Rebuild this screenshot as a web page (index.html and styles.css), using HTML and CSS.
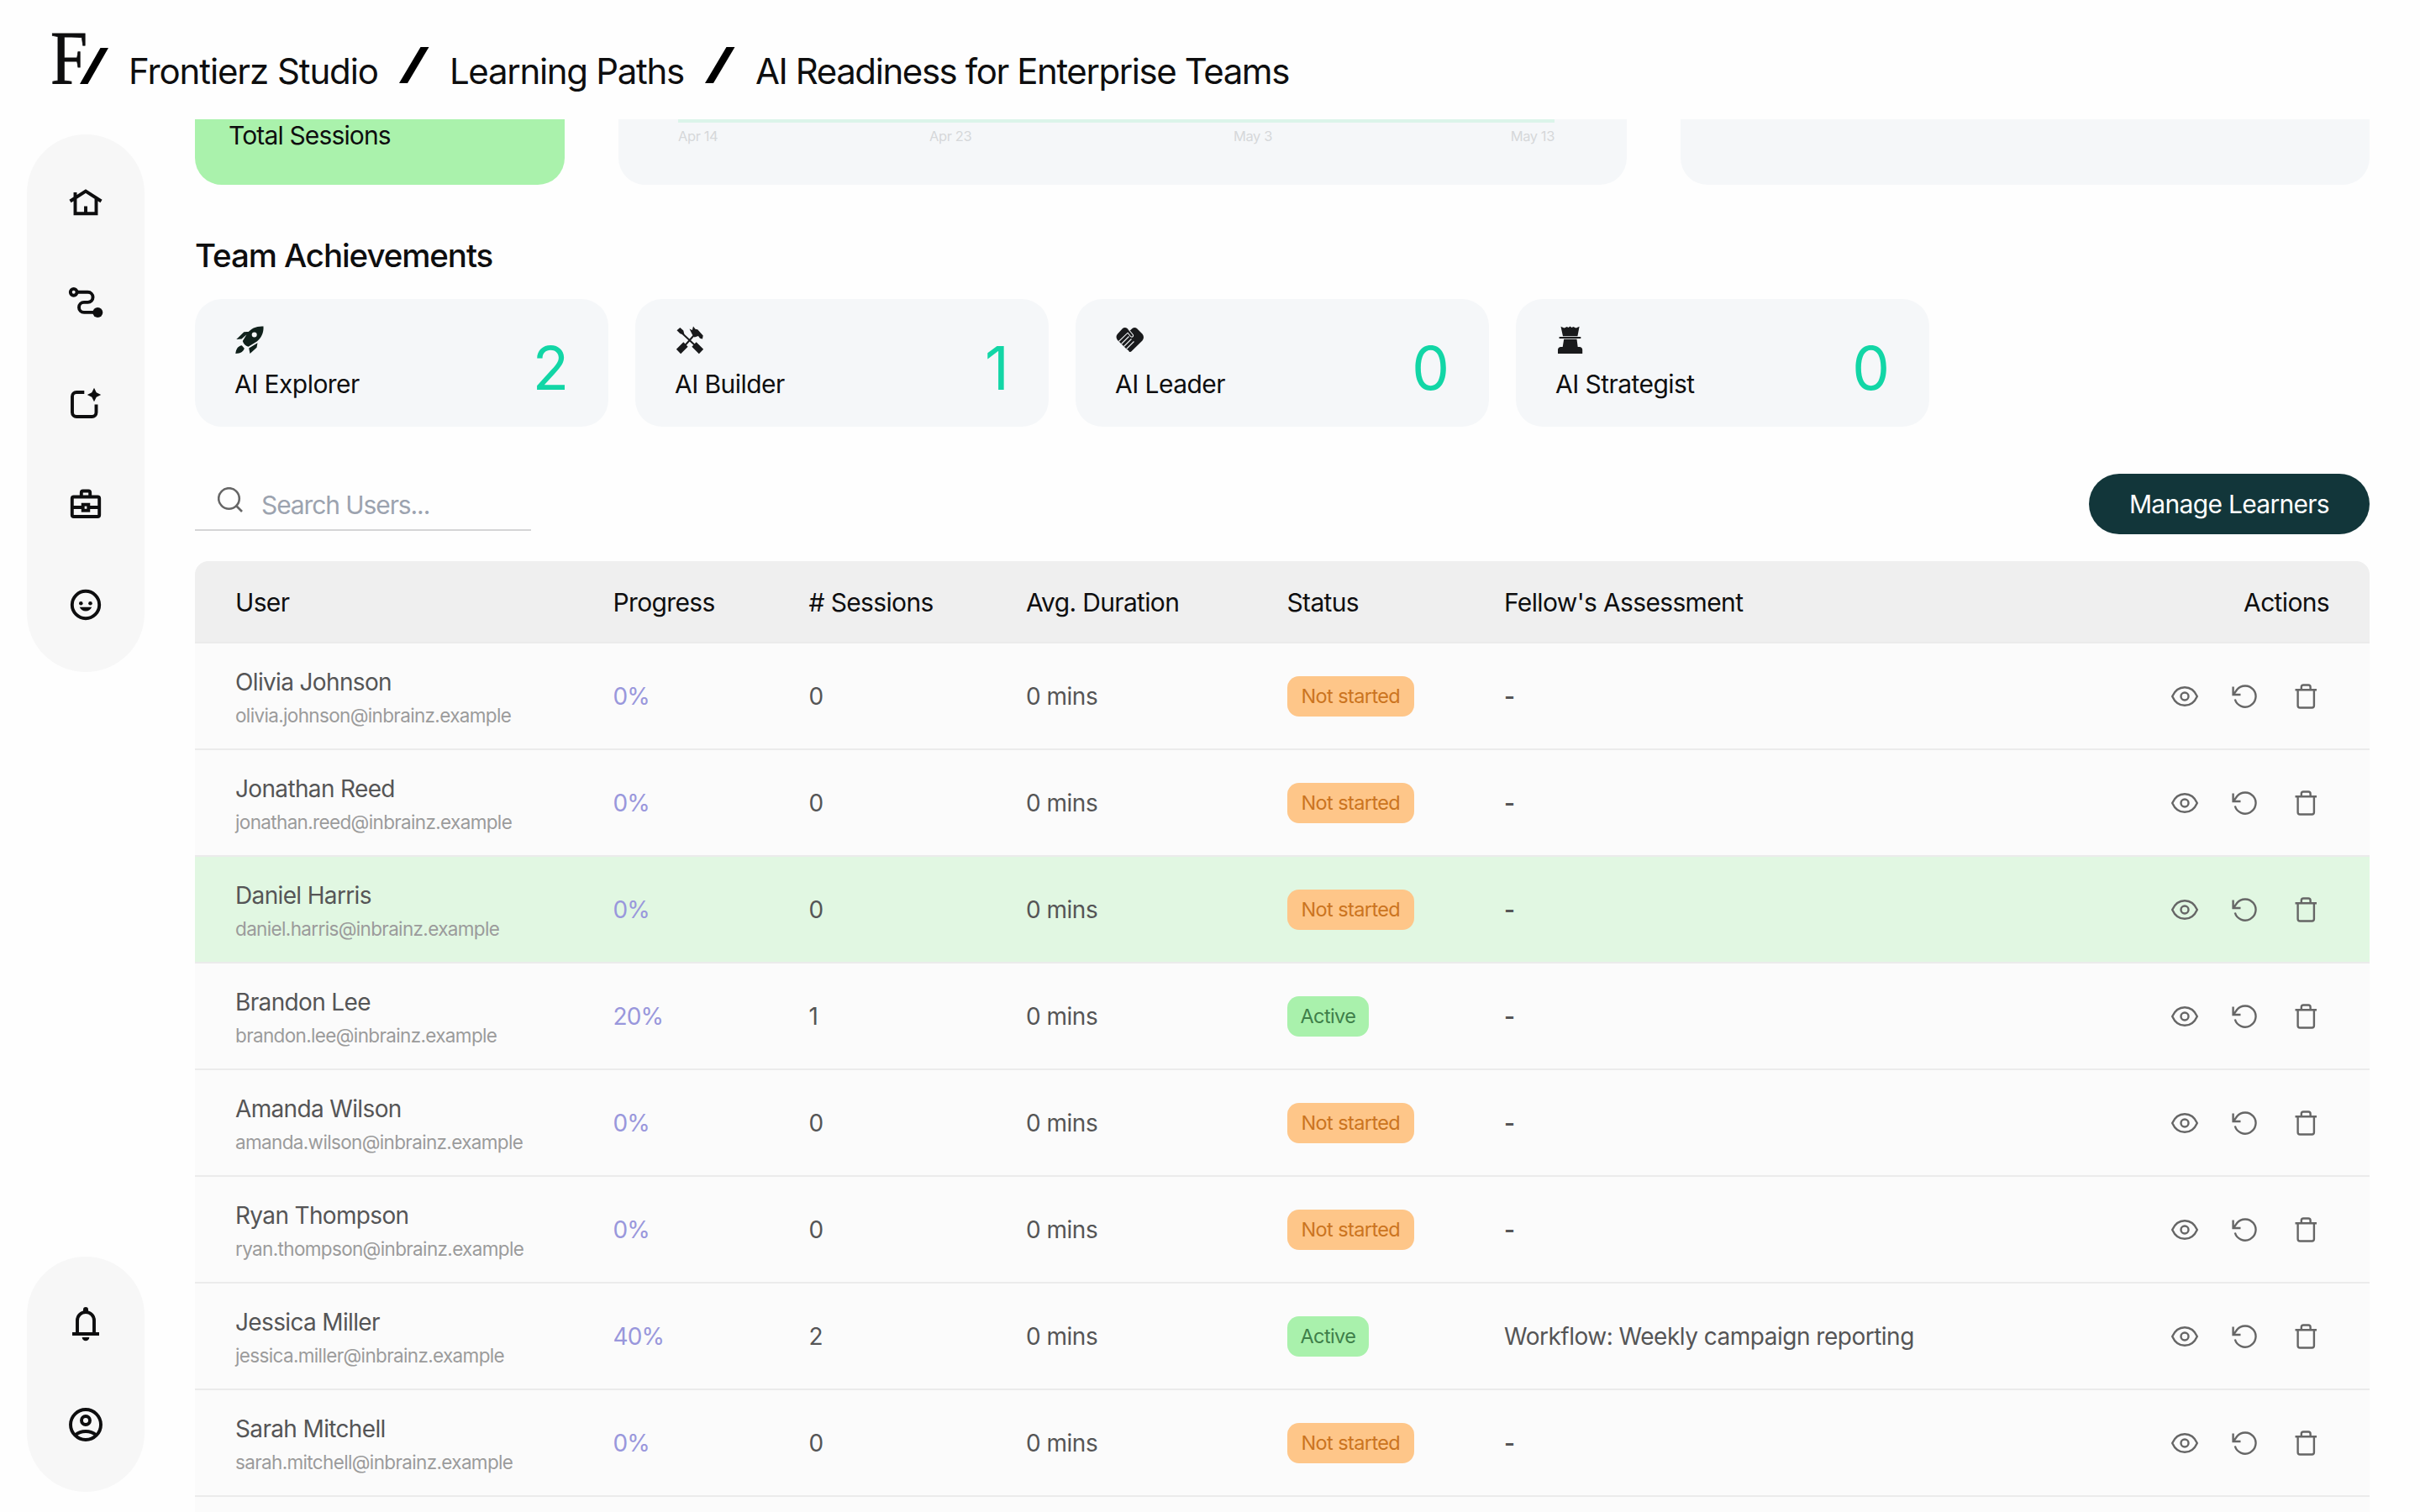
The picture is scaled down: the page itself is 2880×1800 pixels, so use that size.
FILE: index.html
```html
<!DOCTYPE html>
<html lang="en">
<head>
    <meta charset="UTF-8">
    <meta name="viewport" content="width=device-width, initial-scale=1.0">
    <title>AI Readiness for Enterprise Teams</title>
    <link rel="stylesheet" href="styles.css">
</head>
<body>
    <!-- Row action icons, reused by every user row -->
    <svg class="sprite">
        <symbol id="eye" viewBox="0 0 32 32">
            <path d="M1.200 16C4.500 8.500 10 5.200 16 5.200s11.500 3.300 14.800 10.800C27.500 23.500 22 26.800 16 26.800S4.500 23.500 1.200 16z"/>
            <circle cx="16" cy="16" r="4.500"/>
        </symbol>
        <symbol id="reset" viewBox="0 0 32 32">
            <path d="M1.600 4.500V14H10.500M2.200 13.600L6.200 8A12.600 12.600 0 1 1 3.800 19.500"/>
        </symbol>
        <symbol id="trash" viewBox="0 0 32 32">
            <path d="M3.500 8.200H29M10.800 8V5a2.500 2.500 0 0 1 2.500-2.500h5.800a2.500 2.500 0 0 1 2.500 2.500V8M6.600 8.200V27a2.500 2.500 0 0 0 2.500 2.500h14.300a2.500 2.500 0 0 0 2.500-2.500V8.200"/>
        </symbol>
    </svg>

    <header class="header">
        <div class="logo">
            <span class="logo-letter">F</span>
            <svg class="logo-slash" width="34" height="43" viewBox="0 0 34 43"><polygon points="24.500,0 34,0 9.500,43 0,43"/></svg>
        </div>
        <nav class="crumbs">
            <span class="crumb">Frontierz Studio</span>
            <svg class="slash" width="36" height="43" viewBox="0 0 36 43"><polygon points="25.500,0 35.500,0 10,43 0,43"/></svg>
            <span class="crumb">Learning Paths</span>
            <svg class="slash" width="36" height="43" viewBox="0 0 36 43"><polygon points="25.500,0 35.500,0 10,43 0,43"/></svg>
            <span class="crumb current">AI Readiness for Enterprise Teams</span>
        </nav>
    </header>

    <div class="layout">
        <aside class="sidebar">
            <nav class="pill-nav">
                <!-- Home -->
                <svg class="nav-icon" viewBox="0 0 48 48">
                    <path d="M5.500 23.500L24 11.500l18.500 12M11.500 13v25.300h25V19M24 29.500v9"/>
                </svg>
                <!-- Learning paths -->
                <svg class="nav-icon" viewBox="0 0 48 48">
                    <path d="M14 11.800h12.500a6 6 0 0 1 0 12.100H22a6 6 0 0 0 0 12h16"/>
                    <circle cx="9.700" cy="11.800" r="3.900"/>
                    <circle class="solid" cx="38.300" cy="35.900" r="6"/>
                </svg>
                <!-- New session -->
                <svg class="nav-icon" viewBox="0 0 48 48">
                    <path d="M22.300 11H13a5 5 0 0 0-5 5v19a5 5 0 0 0 5 5h18.500a5 5 0 0 0 5-5v-9.500"/>
                    <path class="solid" d="M34 5.800l2.700 5.500 5.500 2.700-5.500 2.700L34 22.200l-2.700-5.500-5.500-2.700 5.500-2.700z"/>
                </svg>
                <!-- Toolbox -->
                <svg class="nav-icon" viewBox="0 0 48 48">
                    <rect x="7.800" y="15.500" width="32.400" height="23.500" rx="2"/>
                    <path d="M18.800 15v-4.500a2 2 0 0 1 2-2h6.400a2 2 0 0 1 2 2V15M8 28h12M28 28h12"/>
                    <rect x="20.700" y="24.700" width="6.600" height="7"/>
                </svg>
                <!-- Fellow -->
                <svg class="nav-icon" viewBox="0 0 48 48">
                    <circle cx="24" cy="24" r="16.200"/>
                    <circle class="solid" cx="18.300" cy="22.200" r="2.300"/>
                    <circle class="solid" cx="29.500" cy="22.200" r="2.300"/>
                    <path class="solid" d="M16.800 26.700h14.400c-1.200 3-3.900 4.900-7.200 4.900s-6-1.900-7.200-4.900z"/>
                </svg>
            </nav>
            <nav class="pill-nav">
                <!-- Notifications -->
                <svg class="nav-icon" viewBox="0 0 48 48">
                    <path d="M14 36V20a10 10 0 0 1 20 0v16M8 36h32"/>
                    <path class="solid" d="M21 10V7a3 3 0 0 1 6 0v3zM19.700 40h8.600a4.300 4.300 0 0 1-8.600 0z"/>
                </svg>
                <!-- Account -->
                <svg class="nav-icon" viewBox="0 0 48 48">
                    <circle cx="24" cy="24" r="18"/>
                    <circle cx="24" cy="19" r="5"/>
                    <path d="M11.500 36.500C15 33.500 19 32 24 32s9 1.500 12.500 4.500"/>
                </svg>
            </nav>
        </aside>

        <main class="main">
            <section class="stats">
                <div class="stat stat-green">Total Sessions</div>
                <div class="stat chart">
                    <div class="chart-line"></div>
                    <div class="chart-labels">
                        <span>Apr 14</span>
                        <span>Apr 23</span>
                        <span>May 3</span>
                        <span>May 13</span>
                    </div>
                </div>
                <div class="stat"></div>
            </section>

            <h2>Team Achievements</h2>
            <section class="achievements">
                <div class="card">
                    <div>
                        <svg class="badge" viewBox="0 0 34 34">
                            <path fill="#10211c" d="M33.500.5C25.500 0 18.500 3 14.500 8.500L8.800 18c.8 3 3.300 5.800 6.700 6.800l10.300-6.300C31 14 34 8.500 33.500.5zM17.500 6.800l-7.200.5L1.300 16l6.200-.6zM26.500 20.300l-10.300 6.200 1.300 6.500 8-7.200zM7.800 23.200c-4.300.5-6.800 3.800-7.500 9.800 6-.3 9.500-2.300 10.500-6.200z"/>
                            <circle cx="22.700" cy="10.600" r="3" fill="#f5f7f9"/>
                        </svg>
                        <div class="card-label">AI Explorer</div>
                    </div>
                    <div class="card-count">2</div>
                </div>
                <div class="card">
                    <div>
                        <svg class="badge" viewBox="0 0 34 34">
                            <path d="M7 8l16 15M10.500 24L22 11" fill="none" stroke="#191a1c" stroke-width="2"/>
                            <path d="M3.500 30.500l8.500-8.500M22 22l8.500 8.500" fill="none" stroke="#191a1c" stroke-width="7.500"/>
                            <path fill="#191a1c" d="M1.500 5.200L5.300 2l4 3.500 1.200 5-5-1.200zM16.500 3.500L19.800 5 21 .5l2.500 3.200 2.700.6 6.500 7.200-.7 4-3-.7-2-2.800-4.500 1.500-2.500-3z"/>
                        </svg>
                        <div class="card-label">AI Builder</div>
                    </div>
                    <div class="card-count">1</div>
                </div>
                <div class="card">
                    <div>
                        <svg class="badge" viewBox="0 0 34 34">
                            <path fill="#191a1c" d="M8 3c1.500-1.500 4-1.500 5.500 0l3.300 2.500L19.500 3c1.500-1.500 4-1.500 5.500 0l6.500 6.500c2 2.500 2 5.500 0 8L18.500 30.300c-1.200 1.200-3 .8-3.200-.8l-3-2.200-2.500-2.500-3-3-3-3-1.800-1.800c-2-2.500-2-5.500 0-7.500z"/>
                            <path fill="none" stroke="#f5f7f9" stroke-width="1.100" d="M14.500 3.500l5.800 7c1.200 2.500-1.800 3.500-3.200 1.500l-3-3.800L3.500 18.500M15.500 12.500L6.500 21.500M18.500 15.500l-9 9M21.500 18.500l-9 9"/>
                        </svg>
                        <div class="card-label">AI Leader</div>
                    </div>
                    <div class="card-count">0</div>
                </div>
                <div class="card">
                    <div>
                        <svg class="badge" viewBox="0 0 34 34">
                            <path fill="#191a1c" d="M5.500.8l4 1.700 3.300-1.400L14.500 2l2-1.500 2 1.500 1.800-.9 3.300 1.400 4-1.700-2.200 11.400H8zM3.600 13h25.700v2H3.600zM9.200 15.800h15.300l1.200 9.200h2c2 0 3.500 1.300 3.500 3.300V33H2v-4.700C2 26.300 3.500 25 5.500 25h2.200z"/>
                        </svg>
                        <div class="card-label">AI Strategist</div>
                    </div>
                    <div class="card-count">0</div>
                </div>
            </section>

            <div class="toolbar">
                <div class="search">
                    <svg class="search-icon" viewBox="0 0 30 30"><circle cx="13.500" cy="13.500" r="12.300"/><path d="M22.500 22.500l6.500 6.500"/></svg>
                    <span>Search Users...</span>
                </div>
                <button class="manage">Manage Learners</button>
            </div>

            <section class="table">
                <div class="row head">
                    <div>User</div>
                    <div>Progress</div>
                    <div># Sessions</div>
                    <div>Avg. Duration</div>
                    <div>Status</div>
                    <div>Fellow's Assessment</div>
                    <div class="actions-title">Actions</div>
                </div>
                <div class="row">
                    <div class="user"><div class="name">Olivia Johnson</div><div class="email">olivia.johnson@inbrainz.example</div></div>
                    <div class="progress">0%</div>
                    <div>0</div>
                    <div>0 mins</div>
                    <div><span class="tag pending">Not started</span></div>
                    <div class="empty">-</div>
                    <div class="actions"><svg><use href="#eye"/></svg><svg><use href="#reset"/></svg><svg><use href="#trash"/></svg></div>
                </div>
                <div class="row">
                    <div class="user"><div class="name">Jonathan Reed</div><div class="email">jonathan.reed@inbrainz.example</div></div>
                    <div class="progress">0%</div>
                    <div>0</div>
                    <div>0 mins</div>
                    <div><span class="tag pending">Not started</span></div>
                    <div class="empty">-</div>
                    <div class="actions"><svg><use href="#eye"/></svg><svg><use href="#reset"/></svg><svg><use href="#trash"/></svg></div>
                </div>
                <div class="row selected">
                    <div class="user"><div class="name">Daniel Harris</div><div class="email">daniel.harris@inbrainz.example</div></div>
                    <div class="progress">0%</div>
                    <div>0</div>
                    <div>0 mins</div>
                    <div><span class="tag pending">Not started</span></div>
                    <div class="empty">-</div>
                    <div class="actions"><svg><use href="#eye"/></svg><svg><use href="#reset"/></svg><svg><use href="#trash"/></svg></div>
                </div>
                <div class="row">
                    <div class="user"><div class="name">Brandon Lee</div><div class="email">brandon.lee@inbrainz.example</div></div>
                    <div class="progress">20%</div>
                    <div>1</div>
                    <div>0 mins</div>
                    <div><span class="tag active">Active</span></div>
                    <div class="empty">-</div>
                    <div class="actions"><svg><use href="#eye"/></svg><svg><use href="#reset"/></svg><svg><use href="#trash"/></svg></div>
                </div>
                <div class="row">
                    <div class="user"><div class="name">Amanda Wilson</div><div class="email">amanda.wilson@inbrainz.example</div></div>
                    <div class="progress">0%</div>
                    <div>0</div>
                    <div>0 mins</div>
                    <div><span class="tag pending">Not started</span></div>
                    <div class="empty">-</div>
                    <div class="actions"><svg><use href="#eye"/></svg><svg><use href="#reset"/></svg><svg><use href="#trash"/></svg></div>
                </div>
                <div class="row">
                    <div class="user"><div class="name">Ryan Thompson</div><div class="email">ryan.thompson@inbrainz.example</div></div>
                    <div class="progress">0%</div>
                    <div>0</div>
                    <div>0 mins</div>
                    <div><span class="tag pending">Not started</span></div>
                    <div class="empty">-</div>
                    <div class="actions"><svg><use href="#eye"/></svg><svg><use href="#reset"/></svg><svg><use href="#trash"/></svg></div>
                </div>
                <div class="row">
                    <div class="user"><div class="name">Jessica Miller</div><div class="email">jessica.miller@inbrainz.example</div></div>
                    <div class="progress">40%</div>
                    <div>2</div>
                    <div>0 mins</div>
                    <div><span class="tag active">Active</span></div>
                    <div>Workflow: Weekly campaign reporting</div>
                    <div class="actions"><svg><use href="#eye"/></svg><svg><use href="#reset"/></svg><svg><use href="#trash"/></svg></div>
                </div>
                <div class="row">
                    <div class="user"><div class="name">Sarah Mitchell</div><div class="email">sarah.mitchell@inbrainz.example</div></div>
                    <div class="progress">0%</div>
                    <div>0</div>
                    <div>0 mins</div>
                    <div><span class="tag pending">Not started</span></div>
                    <div class="empty">-</div>
                    <div class="actions"><svg><use href="#eye"/></svg><svg><use href="#reset"/></svg><svg><use href="#trash"/></svg></div>
                </div>
                <div class="row"></div>
            </section>
        </main>
    </div>
</body>
</html>
```
FILE: styles.css
```css
* {
    box-sizing: border-box;
}
body {
    margin: 0;
    height: 1800px;
    overflow: hidden;
    display: flex;
    flex-direction: column;
    font-family: Inter, "Liberation Sans", sans-serif;
    background-color: #fefefe;
    color: #0e0e0f;
}
.sprite {
    display: none;
}

/* Header */
.header {
    display: flex;
    flex: none;
    align-items: flex-start;
    height: 142px;
    padding: 0 60px;
}
.logo {
    flex: none;
    display: flex;
    width: 72px;
}
.logo-letter {
    flex: none;
    width: 35px;
    font-family: "Liberation Serif", serif;
    font-size: 90px;
    line-height: 140px;
    transform: scaleX(0.88);
    transform-origin: 0 0;
    -webkit-text-stroke: 0.8px #0e0e0f;
}
.logo-slash {
    flex: none;
    margin-top: 57px;
}
.crumbs {
    display: flex;
    padding: 56px 0 0 21px;
    gap: 25px;
}
.crumb {
    font-size: 42px;
    line-height: 57px;
    letter-spacing: -1.1px;
    white-space: nowrap;
}
.crumb:nth-child(3) {
    margin-left: -1px;
    letter-spacing: -1.3px;
}
.crumb.current {
    margin-left: -1px;
    letter-spacing: -1.42px;
}

/* Sidebar */
.layout {
    display: flex;
    height: 1658px;
}
.sidebar {
    flex: none;
    width: 232px;
    padding: 18px 60px 24px 32px;
    display: flex;
    flex-direction: column;
    justify-content: space-between;
}
.pill-nav {
    display: flex;
    flex-direction: column;
    align-items: center;
    gap: 72px;
    padding: 56px 0;
    border-radius: 70px;
    background-color: #f7f7f7;
}
.nav-icon {
    width: 48px;
    height: 48px;
    fill: none;
    stroke: #0e0e0f;
    stroke-width: 3.9;
}
.nav-icon .solid {
    fill: #0e0e0f;
    stroke: none;
}

/* Stats row, cut off under the header */
.main {
    width: 2588px;
    overflow: hidden;
}
.stats {
    display: grid;
    grid-template-columns: 440px 1200px 820px;
    gap: 64px;
    height: 78px;
}
.stat {
    border-radius: 0 0 32px 32px;
    background-color: #f5f7f9;
}
.stat-green {
    padding-left: 40px;
    font-size: 30px;
    line-height: 39px;
    letter-spacing: -0.85px;
    background-color: #aaf2ac;
}
.chart {
    padding: 0 86px 0 71px;
}
.chart-line {
    height: 4px;
    background-color: #dbf4ea;
}
.chart-labels {
    display: flex;
    justify-content: space-between;
    font-size: 16.5px;
    line-height: 33px;
    letter-spacing: -0.4px;
    color: #d6d8da;
}
.chart-labels span:nth-child(3) {
    margin-left: 60px;
    margin-right: 32px;
}

/* Achievements */
h2 {
    margin: 60px 0 28px;
    font-size: 38.5px;
    font-weight: 550;
    line-height: 48px;
    letter-spacing: -1.1px;
}
.achievements {
    display: flex;
    gap: 32px;
}
.card {
    display: flex;
    justify-content: space-between;
    width: 492px;
    height: 152px;
    padding: 32px 47px 0 48px;
    border-radius: 32px;
    background-color: #f5f7f9;
}
.badge {
    display: block;
    width: 34px;
    height: 34px;
}
.card-label {
    margin-top: 15px;
    margin-left: -1px;
    font-size: 30px;
    line-height: 40px;
    letter-spacing: -0.55px;
}
.card-count {
    margin-top: 14px;
    font-size: 71px;
    line-height: 72px;
    color: #12d6a6;
}

/* Toolbar */
.toolbar {
    display: flex;
    justify-content: space-between;
    margin: 56px 0 32px;
    height: 72px;
}
.search {
    display: flex;
    align-items: center;
    gap: 22px;
    width: 400px;
    height: 68px;
    padding: 8px 0 0 27px;
    border-bottom: 2px solid #d5d5d6;
    font-size: 30px;
    letter-spacing: -1.1px;
    color: #9ca3af;
}
.search-icon {
    width: 30px;
    height: 30px;
    margin-top: -12px;
    fill: none;
    stroke: #666;
    stroke-width: 2.6;
}
.manage {
    width: 334px;
    padding: 0;
    border: none;
    border-radius: 36px;
    background-color: #12363a;
    color: #fff;
    font-family: inherit;
    font-size: 30px;
    letter-spacing: -0.7px;
}

/* Users table */
.table {
    border-radius: 16px 16px 0 0;
    overflow: hidden;
}
.row {
    display: grid;
    grid-template-columns: 449.5px 233px 258.5px 310.5px 258.5px 1fr 300px;
    align-items: center;
    height: 127px;
    padding: 0 48px;
    border-bottom: 2px solid #ebebeb;
    background-color: #fbfbfb;
    font-size: 28px;
    letter-spacing: -0.5px;
    white-space: nowrap;
    color: #555556;
}
.row.head {
    height: 98px;
    padding-top: 2px;
    background-color: #efefef;
    font-size: 30px;
    letter-spacing: -0.65px;
    color: #0e0e0f;
}
.row.selected {
    background-color: #e1f7e2;
}
.user {
    padding-top: 7px;
}
.name {
    line-height: 40px;
    letter-spacing: -0.65px;
}
.email {
    font-size: 22.5px;
    line-height: 40px;
    letter-spacing: -0.65px;
    color: #9b9b9b;
}
.progress {
    color: #9997dc;
    letter-spacing: -0.9px;
}
.empty {
    font-weight: 600;
}
.tag {
    display: block;
    width: fit-content;
    height: 48px;
    padding: 0 17px;
    border-radius: 14px;
    font-size: 23.5px;
    line-height: 48px;
    letter-spacing: -0.6px;
}
.pending {
    background-color: #fec689;
    color: #cb7420;
}
.active {
    padding: 0 16px;
    background-color: #a9f1ac;
    color: #3f7f4a;
}
.actions-title {
    text-align: right;
}
.actions {
    display: flex;
    justify-content: flex-end;
    gap: 40px;
    padding-right: 12px;
}
.actions svg {
    width: 32px;
    height: 32px;
    fill: none;
    stroke: #666;
    stroke-width: 2.4;
}
```
